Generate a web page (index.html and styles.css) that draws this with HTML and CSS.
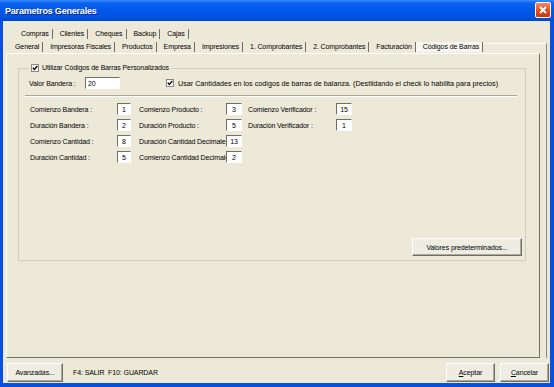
FILE: index.html
```html
<!DOCTYPE html>
<html lang="es">
<head>
  <meta charset="UTF-8">
  <title>Parametros Generales</title>
  <link rel="stylesheet" href="styles.css">
</head>
<body>
  <div class="window">
    <div class="titlebar">
      <span class="title">Parametros Generales</span>
      <span class="close">
        <svg viewBox="0 0 14 14" width="14" height="14"><path d="M4 4 L10 10 M10 4 L4 10" stroke="#fff" stroke-width="1.8" fill="none"/></svg>
      </span>
    </div>

    <div class="client">
      <div class="tabctl">
        <div class="tabrow back">
          <span class="tab">Compras</span>
          <span class="tab">Clientes</span>
          <span class="tab">Cheques</span>
          <span class="tab">Backup</span>
          <span class="tab">Cajas</span>
        </div>
        <div class="tabrow front">
          <span class="tab">General</span>
          <span class="tab">Impresoras Fiscales</span>
          <span class="tab">Productos</span>
          <span class="tab">Empresa</span>
          <span class="tab">Impresiones</span>
          <span class="tab">1. Comprobantes</span>
          <span class="tab">2. Comprobantes</span>
          <span class="tab">Facturación</span>
          <span class="tab active">Códigos de Barras</span>
          <span class="tab-fill"></span>
        </div>

        <div class="page-wrap">
          <div class="page">
            <fieldset class="group">
              <legend>
                <label class="check">
                  <svg class="chk" viewBox="0 0 8 8" width="8" height="8"><rect x="0.5" y="0.5" width="7" height="7" fill="#fff" stroke="#8a8a80"/><path d="M1.8 3.6 L3.3 5.4 L6.4 2" stroke="#000" stroke-width="1.3" fill="none"/></svg>
                  Utilizar Códigos de Barras Personalizados
                </label>
              </legend>

              <div class="flag-row">
                <span class="flag-label">Valor Bandera :</span>
                <input class="field wide" type="text" value="20">
                <label class="check balanza">
                  <svg class="chk" viewBox="0 0 8 8" width="8" height="8"><rect x="0.5" y="0.5" width="7" height="7" fill="#fff" stroke="#8a8a80"/><path d="M1.8 3.6 L3.3 5.4 L6.4 2" stroke="#000" stroke-width="1.3" fill="none"/></svg>
                  Usar Cantidades en los codigos de barras de balanza. (Destildando el check lo habilita para precios)
                </label>
              </div>

              <div class="sep"></div>

              <div class="grid">
                <span class="lbl">Comienzo Bandera :</span>
                <input class="field small" type="text" value="1">
                <span class="lbl">Comienzo Producto :</span>
                <input class="field" type="text" value="3">
                <span class="lbl">Comienzo Verificador :</span>
                <input class="field" type="text" value="15">

                <span class="lbl">Duración Bandera :</span>
                <input class="field small" type="text" value="2">
                <span class="lbl">Duración Producto :</span>
                <input class="field" type="text" value="5">
                <span class="lbl">Duración Verificador :</span>
                <input class="field" type="text" value="1">

                <span class="lbl">Comienzo Cantidad :</span>
                <input class="field small" type="text" value="8">
                <span class="lbl">Duración Cantidad Decimales</span>
                <input class="field" type="text" value="13">
                <span></span>
                <span></span>

                <span class="lbl">Duración Cantidad :</span>
                <input class="field small" type="text" value="5">
                <span class="lbl">Comienzo Cantidad Decimales</span>
                <input class="field" type="text" value="2">
              </div>

              <div class="group-actions">
                <button class="btn defaults">Valores predeterminados...</button>
              </div>
            </fieldset>
          </div>
        </div>
      </div>

      <div class="footer">
        <button class="btn advanced">Avanzadas...</button>
        <span class="keys">F4: SALIR&nbsp; F10: GUARDAR</span>
        <span class="spacer"></span>
        <button class="btn action"><u>A</u>ceptar</button>
        <button class="btn action"><u>C</u>ancelar</button>
      </div>
    </div>
  </div>
</body>
</html>
```

FILE: styles.css
```css
body {
  margin: 0;
  font-family: "Liberation Sans", Arial, sans-serif;
  font-size: 7px;
  letter-spacing: -0.1px;
  color: #000;
}
.window {
  width: 554px;
  height: 387px;
  display: flex;
  flex-direction: column;
  background: #0a4fe0; /* window frame */
}
.titlebar {
  height: 21px;
  flex: none;
  display: flex;
  align-items: center;
  justify-content: space-between;
  padding: 0 3px 0 5px;
  background: linear-gradient(to bottom, #3d8dff 0, #0a62f0 3px, #0057e8 50%, #0052e2 85%, #0046d0 100%);
}
.title {
  color: #fff;
  font-size: 9px;
  font-weight: bold;
  letter-spacing: -0.2px;
  text-shadow: 1px 1px 0 #0a2a8a;
}
.close {
  width: 14px;
  height: 14px;
  margin-top: -1px;
  border: 1px solid #fff;
  border-radius: 2px;
  background: linear-gradient(to bottom, #f08a6a, #e0481c 60%, #c8380e);
  display: flex;
}
.client {
  flex: 1;
  margin: 0 4px 4px 3px;
  background: #ece9d8;
  display: flex;
  flex-direction: column;
}

/* tabs */
.tabctl {
  margin: 0 3px;
}
.tabrow {
  display: flex;
  align-items: flex-end;
  height: 13px;
}
.tabrow.back {
  margin-top: 6px;
  padding-left: 8px;
}
.tabrow.front {
  padding-left: 2px;
}
.tab {
  height: 10px;
  line-height: 10px;
  margin-bottom: 1px;
  padding: 0 3px 0 7px;
  border-right: 1px solid #716f64;
  white-space: nowrap;
}
.tab.active {
  background: #f6f5ef;
}
.tab-fill {
  flex: 1;
  align-self: stretch;
  margin-top: 3px;
  border-top: 1px solid #fff;
  border-right: 1px solid #8c8a7e;
}
.page-wrap {
  border-right: 1px solid #8c8a7e;
  padding-right: 6px;
}
.page {
  height: 305px;
  box-sizing: border-box;
  border: 1px solid;
  border-color: #fff #716f64 #716f64 #fff;
  padding: 9px 13px 0 11px;
}

/* group box */
.group {
  margin: 0;
  padding: 0;
  min-width: 0;
  border: 1px solid #d0cdbc;
}
.group legend {
  margin-left: 10px;
  padding: 0 2px;
  line-height: 10px;
}
.check {
  display: flex;
  align-items: center;
  gap: 3px;
  white-space: nowrap;
}
.chk {
  flex: none;
}
.flag-row {
  display: flex;
  align-items: center;
  height: 12px;
  margin-top: 4px;
  padding-left: 10px;
}
.flag-label {
  width: 56px;
}
.balanza {
  margin-left: 46px;
  gap: 4px;
  font-size: 7.2px;
  letter-spacing: 0;
}
.sep {
  margin: 6px 8px 0 6px;
  border-top: 1px solid #aca899;
  border-bottom: 1px solid #fff;
}
.grid {
  display: grid;
  grid-template-columns: 87px 22px 87px 22px 88px 16px;
  grid-auto-rows: 16px;
  align-items: center;
  margin-top: 4px;
  padding-left: 11px;
}
.lbl {
  white-space: nowrap;
  overflow: hidden;
}
.field {
  width: 16px;
  height: 12px;
  box-sizing: border-box;
  padding: 0;
  margin: 0;
  border: 1px solid;
  border-color: #716f64 #fff #fff #716f64;
  background: #fff;
  font-family: inherit;
  font-size: 7px;
  letter-spacing: -0.1px;
  text-align: center;
  outline: none;
}
.field.small {
  width: 14px;
}
.field.wide {
  width: 35px;
  text-align: left;
  padding-left: 2px;
}
.group-actions {
  display: flex;
  justify-content: flex-end;
  margin-top: 73px;
  padding: 0 3px 4px 0;
}

/* buttons */
.btn {
  height: 18px;
  padding: 0;
  margin: 0;
  border: 1px solid;
  border-color: #fff #716f64 #716f64 #fff;
  box-shadow: inset -1px -1px 0 #aca899;
  background: #efede3;
  font-family: inherit;
  font-size: 7px;
  letter-spacing: -0.1px;
  color: #000;
}
.defaults {
  width: 110px;
}
.footer {
  display: flex;
  align-items: center;
  gap: 5px;
  height: 19px;
  margin-top: 5px;
  padding: 0 1px 0 4px;
}
.footer .btn {
  height: 19px;
}
.advanced {
  width: 56px;
}
.keys {
  margin-left: 5px;
  white-space: nowrap;
}
.spacer {
  flex: 1;
}
.action {
  width: 49px;
}
```
